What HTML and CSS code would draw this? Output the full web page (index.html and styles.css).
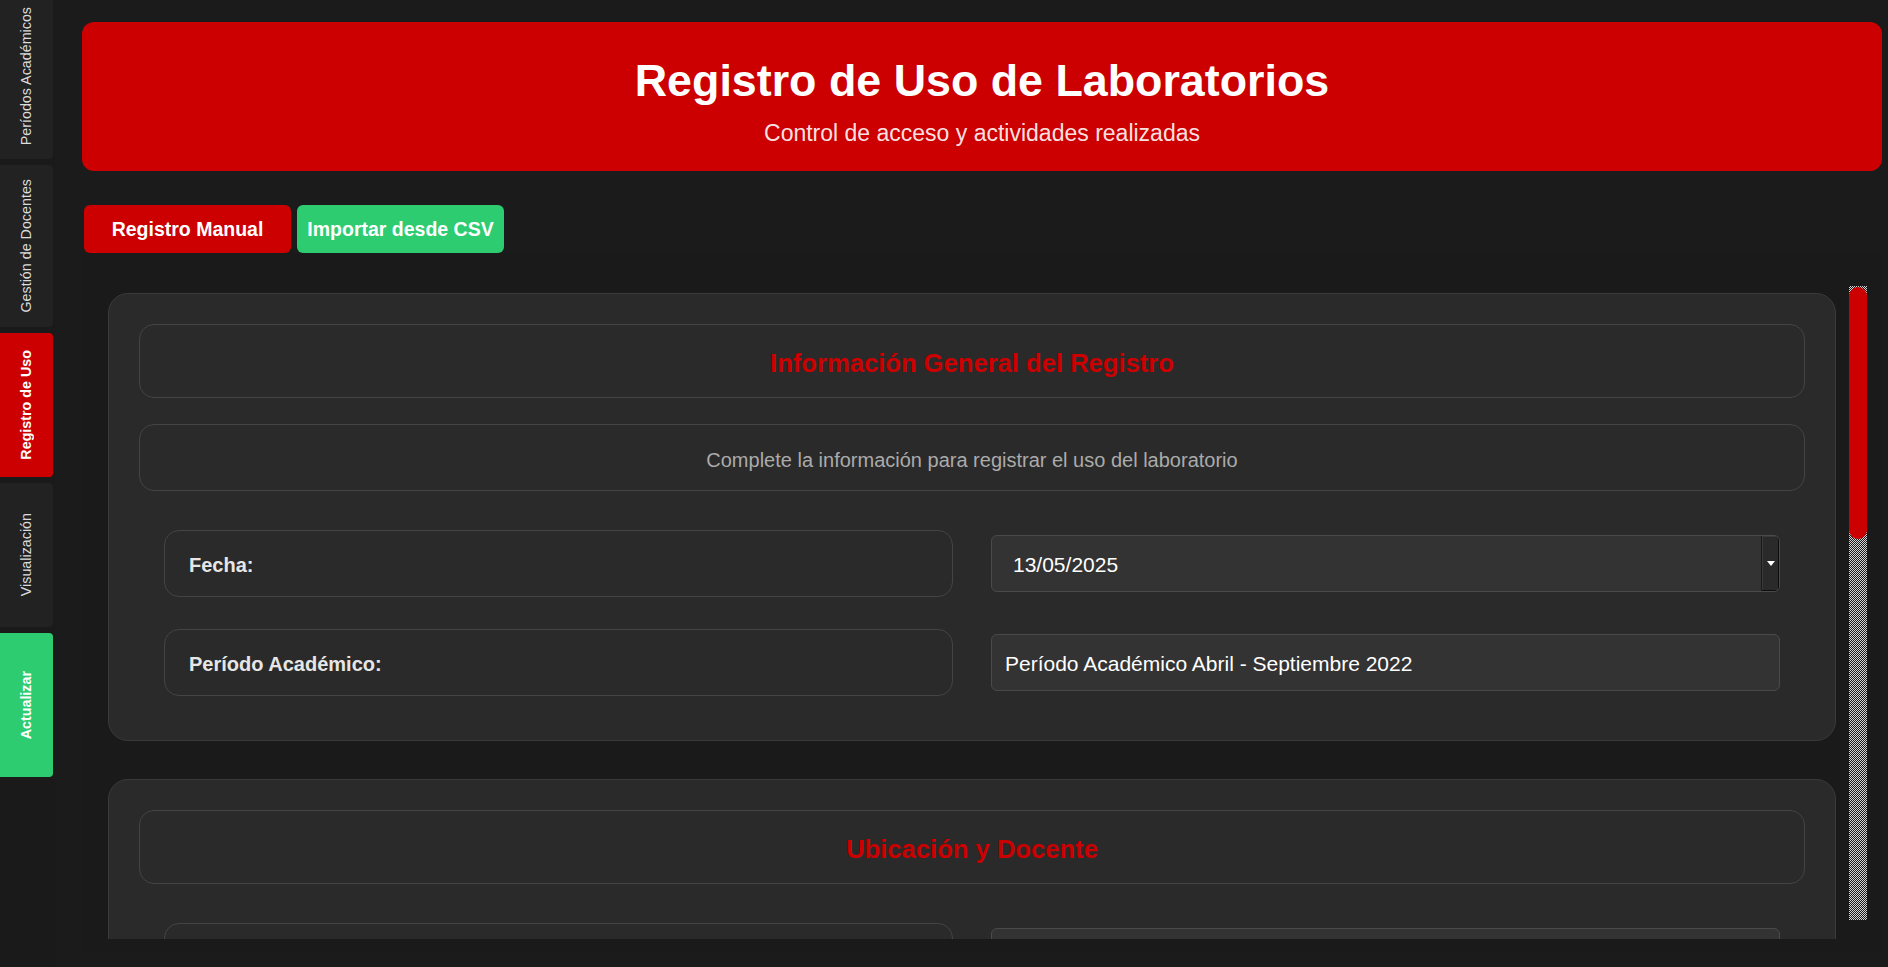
FILE: index.html
```html
<!DOCTYPE html>
<html lang="es">
<head>
<meta charset="utf-8">
<title>Registro de Uso de Laboratorios</title>
<link rel="stylesheet" href="styles.css">
</head>
<body>
<nav class="sidebar">
  <button class="tab"><span class="tab-label">Períodos Académicos</span></button>
  <button class="tab"><span class="tab-label">Gestión de Docentes</span></button>
  <button class="tab tab-active"><span class="tab-label">Registro de Uso</span></button>
  <button class="tab"><span class="tab-label">Visualización</span></button>
  <button class="tab tab-refresh"><span class="tab-label">Actualizar</span></button>
</nav>
<main class="main">
  <header class="hero">
    <h1 class="hero-title">Registro de Uso de Laboratorios</h1>
    <p class="hero-sub">Control de acceso y actividades realizadas</p>
  </header>
  <div class="modes">
    <button class="mode mode-manual">Registro Manual</button>
    <button class="mode mode-csv">Importar desde CSV</button>
  </div>
  <section class="panel">
    <div class="scroller">
      <div class="scroll-content">
        <div class="card">
          <div class="section-title">Información General del Registro</div>
          <div class="section-desc">Complete la información para registrar el uso del laboratorio</div>
          <div class="rows">
            <div class="row">
              <div class="label-box">Fecha:</div>
              <div class="field field-date">
                <span class="field-text">13/05/2025</span>
                <span class="picker"><span class="picker-arrow"></span></span>
              </div>
            </div>
            <div class="row">
              <div class="label-box">Período Académico:</div>
              <div class="field"><span class="field-text">Período Académico Abril - Septiembre 2022</span></div>
            </div>
          </div>
        </div>
        <div class="card">
          <div class="section-title">Ubicación y Docente</div>
          <div class="rows">
            <div class="row">
              <div class="label-box label-empty"></div>
              <div class="field field-empty"></div>
            </div>
          </div>
        </div>
      </div>
      <div class="scrollbar"><div class="scroll-thumb"></div></div>
    </div>
  </section>
</main>
</body>
</html>
```

FILE: styles.css
```css
* { box-sizing: border-box; }

html, body {
  margin: 0;
  height: 967px;
  overflow: hidden;
}

body {
  display: flex;
  background: #1b1b1b;
  font-family: "Liberation Sans", Arial, sans-serif;
  color: #fff;
}

button {
  font-family: inherit;
  cursor: pointer;
}

/* Sidebar */
.sidebar {
  flex: none;
  width: 55px;
  margin-top: -7px;
  display: flex;
  flex-direction: column;
  gap: 6px;
  background: #1a1a1a;
}

.tab {
  width: 53px;
  min-height: 144px;
  padding: 14px 0;
  border: 0;
  border-radius: 0 4px 4px 0;
  background: #222222;
  color: #dcdcdc;
  display: flex;
  align-items: center;
  justify-content: center;
  font-size: 14.3px;
}

.tab-label {
  writing-mode: vertical-rl;
  transform: rotate(180deg);
  line-height: 17px;
  white-space: nowrap;
}

.tab-active {
  background: #cc0000;
  color: #fff;
  font-weight: 700;
}

.tab-refresh {
  background: #2ecc71;
  color: #fff;
  font-weight: 700;
}

/* Main */
.main {
  flex: 1;
  min-width: 0;
  padding: 22px 6px 0 27px;
  display: flex;
  flex-direction: column;
}

.hero {
  background: #cc0000;
  border-radius: 12px;
  padding: 32px 20px 24px;
  text-align: center;
}

.hero-title {
  margin: 0;
  font-size: 44.8px;
  line-height: 1.2;
  font-weight: 700;
}

.hero-sub {
  margin: 12px 0 0;
  font-size: 23px;
  line-height: 1.2;
  color: rgba(255, 255, 255, 0.9);
}

.modes {
  margin-top: 34px;
  padding-left: 2px;
  display: flex;
  gap: 6px;
}

.mode {
  width: 207px;
  height: 48px;
  border: 0;
  border-radius: 6px;
  color: #fff;
  font-size: 19.5px;
  font-weight: 700;
}

.mode-manual { background: #cc0000; }
.mode-csv { background: #2ecc71; }

/* Panel & scroll area */
.panel {
  height: 700px;
  padding: 33px 15px 14px 15px;
  background: #1a1a1a;
}

.scroller {
  height: 653px;
  display: flex;
}

.scroll-content {
  flex: 1;
  min-width: 0;
  overflow: hidden;
  padding: 7px 13px 0 11px;
}

.scrollbar {
  flex: none;
  width: 18px;
  margin-bottom: 19px;
  padding-top: 1px;
  background: repeating-conic-gradient(#d4d4d4 0 25%, #1b1b1b 0 50%) 0 0 / 2px 2px;
}

.scroll-thumb {
  height: 252px;
  border-radius: 9px;
  background: #cc0000;
}

/* Cards */
.card {
  background: #2a2a2a;
  border: 1px solid #3a3a3a;
  border-radius: 20px;
  padding: 30px;
  margin-bottom: 38px;
}

.section-title {
  border: 1px solid #444444;
  border-radius: 15px;
  padding: 23px 20px 18px;
  text-align: center;
  color: #cc0000;
  font-size: 25.6px;
  line-height: 1.2;
  font-weight: 700;
  margin-bottom: 26px;
}

.section-desc {
  border: 1px solid #444444;
  border-radius: 15px;
  padding: 23px 20px 18px;
  text-align: center;
  color: #ababab;
  font-size: 20px;
  line-height: 24px;
  margin-bottom: 26px;
}

.rows {
  margin-top: 39px;
  padding: 0 25px 14px;
  display: flex;
  flex-direction: column;
  gap: 32px;
}

.row {
  display: grid;
  grid-template-columns: 1fr 1fr;
  column-gap: 38px;
  align-items: center;
}

.label-box {
  border: 1px solid #444444;
  border-radius: 15px;
  padding: 22px 24px 19px;
  color: #e6e6e6;
  font-size: 20px;
  line-height: 24px;
  font-weight: 700;
}

.label-empty {
  height: 67px;
}

.field {
  display: flex;
  align-items: stretch;
  background: #333333;
  border: 1px solid #4a4a4a;
  border-radius: 6px;
  padding-left: 13px;
  color: #ffffff;
  font-size: 21px;
  line-height: 25px;
  overflow: hidden;
}

.field-empty {
  height: 57px;
}

.field-text {
  flex: 1;
  padding: 16px 0 14px;
  white-space: nowrap;
}

.field-date {
  padding-left: 21px;
}

.picker {
  flex: none;
  width: 18px;
  background: #2a2a2a;
  border-left: 1px solid #1a1a1a;
  box-shadow: inset -1px -1px 0 #0c0c0c, inset 1px 1px 0 #3a3a3a;
  display: flex;
  align-items: center;
  justify-content: center;
}

.picker-arrow {
  width: 0;
  height: 0;
  border-left: 4px solid transparent;
  border-right: 4px solid transparent;
  border-top: 5px solid #ffffff;
}
```
